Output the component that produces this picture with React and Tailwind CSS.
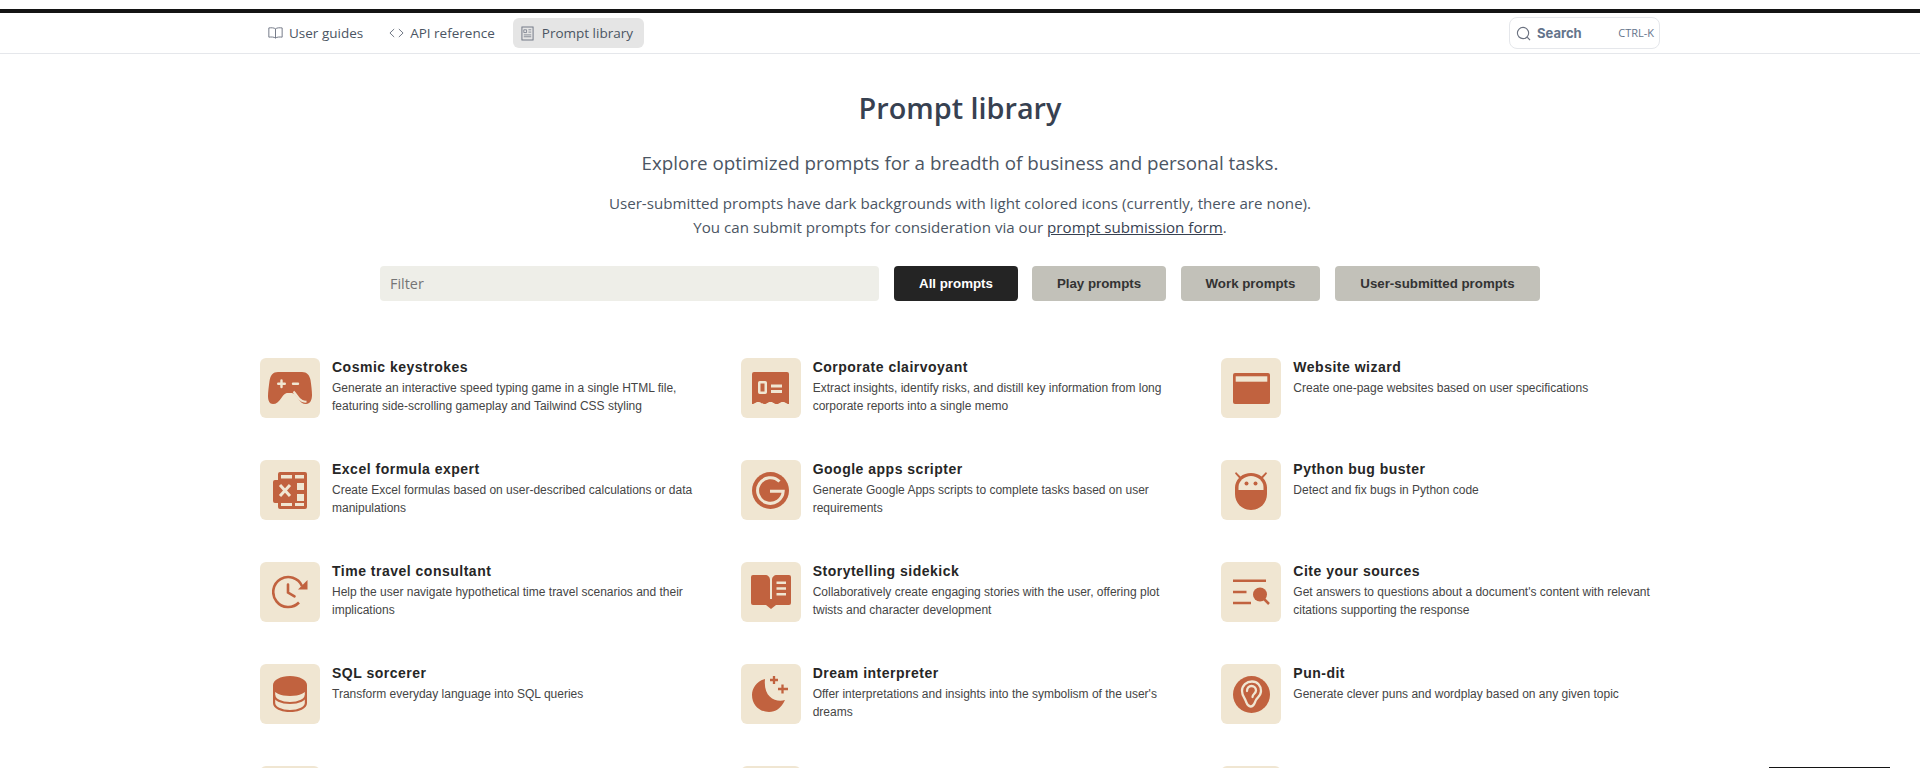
import React from "react";

const C = "#c1623f";
const B = "#f0e6d2";

const icons = {
  game: (
    <svg viewBox="0 0 44 32" className="w-[44px] h-[32px]">
      <path fill={C} d="M10 0H34c5 0 7.500 3 8.500 8 .8 5 1.500 11 1.500 15 0 5-2 9-6 9-3.500 0-5.500-2-7.500-5-2-3-3.500-6-7-6H20c-3.500 0-5 2.500-7 5.500-2.500 3.500-4.500 5.500-8 5.500C1.500 32 0 28.500 0 24c0-4 .8-10 1.500-15C2.500 3 5 0 10 0z" />
      <path fill="none" stroke={B} strokeWidth="2" d="M25.500 19.500c2.500 2.500 4 5.500 6 7.500 2 2 4.500 3 7 2.500" />
      <path stroke={B} strokeWidth="2.400" strokeLinecap="round" d="M13.500 8.500v6.500M10.200 11.800h6.600M25 11.800h5" />
    </svg>
  ),
  memo: (
    <svg viewBox="0 0 37 33" className="w-[37px] h-[33px]">
      <path fill={C} d="M2 0h33a2 2 0 0 1 2 2v30c-3 0-3-2-6.200-2s-3 2-6.100 2-3-2-6.200-2-3 2-6.200 2-3-2-6.100-2-3 2-6.200 2V2a2 2 0 0 1 2-2z" />
      <rect x="7.250" y="10.250" width="6.500" height="10.500" rx=".5" fill="none" stroke={B} strokeWidth="2.500" />
      <path stroke={B} strokeWidth="2.800" d="M19 14h11M19 19.500h11" />
    </svg>
  ),
  web: (
    <svg viewBox="0 0 37 31" className="w-[37px] h-[31px]">
      <rect width="37" height="31" rx="2" fill={C} />
      <rect x="2.700" y="3.300" width="31.600" height="5.400" fill={B} />
    </svg>
  ),
  excel: (
    <svg viewBox="0 0 34 37" className="w-[34px] h-[37px]">
      <path fill={C} d="M7 0h25a2 2 0 0 1 2 2v33a2 2 0 0 1-2 2H7a2 2 0 0 1-2-2v-4H2a2 2 0 0 1-2-2V10a2 2 0 0 1 2-2h3V2a2 2 0 0 1 2-2z" />
      <path fill={B} d="M8 3h11v3.500H8zM22 3h9v3.500h-9zM24 11h7v7h-7zM24 22h7v7h-7zM8 31h11v3H8zM22 31h9v3h-9z" />
      <path stroke={B} strokeWidth="3" d="M7 13l10 11M17 13L7 24" />
    </svg>
  ),
  google: (
    <svg viewBox="0 0 37 37" className="w-[37px] h-[37px]">
      <circle cx="18.500" cy="18.500" r="18.500" fill={C} />
      <path fill="none" stroke={B} strokeWidth="3" d="M27.500 9.500A12.800 12.800 0 1 0 31.200 19.200H18" />
    </svg>
  ),
  bug: (
    <svg viewBox="0 0 32 39" className="w-[32px] h-[39px]">
      <path fill={C} d="M1 1l4.500 4.500C8 3.500 12 2 16 2s8 1.500 10.500 3.500L31 1l1 1.500-4 4.500c2.500 2.500 4 6 4 9.500V23c0 9-7 16-16 16S0 32 0 23v-6.500C0 13 1.500 9.500 4 7L0 2.500z" />
      <path fill={B} d="M3.500 19v-3C3.500 10 9.500 5 16 5s12.500 5 12.500 11v3z" />
      <circle cx="11.500" cy="12.500" r="2" fill={C} />
      <circle cx="20.500" cy="12.500" r="2" fill={C} />
    </svg>
  ),
  time: (
    <svg viewBox="0 0 36 34" className="w-[36px] h-[34px]">
      <path fill="none" stroke={C} strokeWidth="2.600" d="M30 11A15 15 0 1 0 27 27.500" />
      <path fill={C} d="M35.500 5v9.500H26z" />
      <path fill="none" stroke={C} strokeWidth="2.600" strokeLinecap="round" d="M16 9.500v8l6.500 3.800" />
    </svg>
  ),
  book: (
    <svg viewBox="0 0 40 34" className="w-[40px] h-[34px]">
      <path fill={C} d="M2 0h12c3 0 5 2 5 5v19h2V5c0-3 2-5 5-5h12a2 2 0 0 1 2 2v26a2 2 0 0 1-2 2H25l-5 4-5-4H2a2 2 0 0 1-2-2V2a2 2 0 0 1 2-2z" />
      <path stroke={B} strokeWidth="2.400" d="M25.500 7.700h9.500M25.500 13.500h9.500M25.500 19.300h9.500" />
    </svg>
  ),
  cite: (
    <svg viewBox="0 0 37 26" className="w-[37px] h-[26px]">
      <path stroke={C} strokeWidth="2.500" d="M0 1.700h33M0 13h13.500M0 24h18" />
      <circle cx="27" cy="15.500" r="7" fill={C} />
      <path stroke={C} strokeWidth="2.500" d="M31 20l5 5" />
    </svg>
  ),
  sql: (
    <svg viewBox="0 0 34 36" className="w-[34px] h-[36px]">
      <path fill={C} d="M0 9c0-5 7.500-9 17-9s17 4 17 9v3c0 4.500-7.500 8-17 8S0 16.500 0 12z" />
      <path fill="none" stroke={C} strokeWidth="2.200" d="M1.100 12v15c0 4.500 7 8 15.900 8s15.900-3.500 15.900-8V12" />
      <path fill="none" stroke={C} strokeWidth="2.200" d="M1.100 19c0 4.500 7 8 15.900 8s15.900-3.500 15.900-8" />
    </svg>
  ),
  moon: (
    <svg viewBox="0 0 37 36" className="w-[37px] h-[36px]">
      <path fill={C} d="M13 3C5 5 0 12 0 19c0 10 7.500 17 17 17 6.500 0 12-3.500 16-12-9 2.500-22-2-20-21z" />
      <path stroke={C} strokeWidth="2.300" d="M22 0v8M18 4h8M30.500 8.500v9M26 13h10" />
    </svg>
  ),
  ear: (
    <svg viewBox="0 0 37 37" className="w-[37px] h-[37px]">
      <circle cx="18.500" cy="18.500" r="18.500" fill={C} />
      <path fill="none" stroke={B} strokeWidth="2.300" strokeLinecap="round" d="M9 15c0-5.500 4.500-9.500 10-9.500s9 4 9 9.500c0 4.500-3.500 6.500-5 9-1.500 2.500-1.500 6.500-5.500 6.500-3 0-3.500-2.500-4.500-5C12 22 9 20 9 15z" />
      <path fill="none" stroke={B} strokeWidth="2.300" strokeLinecap="round" d="M14 15c0-3 2-5 4.500-5s4.500 2 4.500 4.500c0 3-3.500 3.500-3.500 6.500" />
    </svg>
  ),
};

const cards = [
  ["game", "Cosmic keystrokes", "Generate an interactive speed typing game in a single HTML file, featuring side-scrolling gameplay and Tailwind CSS styling"],
  ["memo", "Corporate clairvoyant", "Extract insights, identify risks, and distill key information from long corporate reports into a single memo"],
  ["web", "Website wizard", "Create one-page websites based on user specifications"],
  ["excel", "Excel formula expert", "Create Excel formulas based on user-described calculations or data manipulations"],
  ["google", "Google apps scripter", "Generate Google Apps scripts to complete tasks based on user requirements"],
  ["bug", "Python bug buster", "Detect and fix bugs in Python code"],
  ["time", "Time travel consultant", "Help the user navigate hypothetical time travel scenarios and their implications"],
  ["book", "Storytelling sidekick", "Collaboratively create engaging stories with the user, offering plot twists and character development"],
  ["cite", "Cite your sources", "Get answers to questions about a document's content with relevant citations supporting the response"],
  ["sql", "SQL sorcerer", "Transform everyday language into SQL queries"],
  ["moon", "Dream interpreter", "Offer interpretations and insights into the symbolism of the user's dreams"],
  ["ear", "Pun-dit", "Generate clever puns and wordplay based on any given topic"],
];

function Card({ icon, title, desc }) {
  return (
    <div className="flex gap-3 h-[60px] min-w-0">
      <div className="w-[60px] h-[60px] shrink-0 rounded-md bg-[#f0e6d2] flex items-center justify-center">{icons[icon]}</div>
      <div className="min-w-0 max-w-[366px] font-['Liberation_Sans',sans-serif]">
        <div className="text-[14px] leading-[20px] font-bold tracking-[0.5px] text-[#262626] -mt-[1px]">{title}</div>
        <div className="mt-[2px] text-[12px] leading-[18px] text-[#454545]">{desc}</div>
      </div>
    </div>
  );
}

function Tab({ icon, label, active }) {
  return (
    <div className={"flex items-center h-[30px] pl-[8px] rounded-md text-[13.500px] text-[#4b5563] " + (active ? "bg-[#e5e5e5] pr-[11px] gap-[8px]" : "pr-[8px] gap-[6px]")}>
      {icon}
      <span className="mt-[1px]">{label}</span>
    </div>
  );
}

export default function App() {
  return (
    <div className="w-[1920px] h-[768px] overflow-hidden bg-white font-['Open_Sans',sans-serif] relative">
      <div className="h-[9px]" />
      <div className="h-[4px] bg-[#141414]" />
      <nav className="h-[41px] border-b border-[#e5e7eb] pl-[260px] pr-[260px] flex items-center justify-between">
        <div className="flex items-center gap-[10px]">
          <Tab
            label="User guides"
            icon={
              <svg viewBox="0 0 16 13" className="w-[15px] h-[12px]" fill="none" stroke="#6b7280" strokeWidth="1">
                <path d="M8 2C6.500.7 3.500.7.800 1v10c2.700-.3 5.700-.3 7.200 1 1.500-1.300 4.500-1.300 7.200-1V1C12.500.7 9.500.7 8 2zM8 2v10" />
              </svg>
            }
          />
          <Tab
            label="API reference"
            icon={
              <svg viewBox="0 0 16 10" className="w-[15px] h-[10px]" fill="none" stroke="#6b7280" strokeWidth="1">
                <path d="M5.500.7L1 5l4.500 4.300M10.500.7L15 5l-4.500 4.300" />
              </svg>
            }
          />
          <Tab
            active
            label="Prompt library"
            icon={
              <svg viewBox="0 0 14 16" className="w-[13px] h-[15px]" fill="none" stroke="#6b7280" strokeWidth="1">
                <rect x="1" y="1" width="12" height="14" />
                <path d="M3 4h3v3H3zM8 4h3M8 6.500h3M3 9.500h8M3 11.500h8" strokeWidth=".8" />
              </svg>
            }
          />
        </div>
        <div className="w-[151px] h-[32px] rounded-lg border border-[#e5e7eb] flex items-center pl-[6px] pr-[5px]">
          <svg viewBox="0 0 16 16" className="w-[15px] h-[15px]" fill="none" stroke="#6b7280" strokeWidth="1.200">
            <circle cx="7.500" cy="7.500" r="6" />
            <path d="M12 12l3 3" />
          </svg>
          <span className="ml-[6px] mt-[1px] text-[13px] font-bold text-[#64748b] font-['Inter',sans-serif]">Search</span>
          <span className="ml-auto mt-[1px] text-[11px] text-[#64748b]">CTRL-K</span>
        </div>
      </nav>
      <main className="text-center">
        <h1 className="mt-[34px] text-[28.800px] leading-[40px] font-[550] text-[#374151]">Prompt library</h1>
        <p className="mt-[21px] text-[18.800px] leading-[28px] text-[#4b5563]">Explore optimized prompts for a breadth of business and personal tasks.</p>
        <p className="mt-[14px] text-[15.130px] leading-[24px] text-[#4b5563]">
          User-submitted prompts have dark backgrounds with light colored icons (currently, there are none).
          <br />
          You can submit prompts for consideration via our <span className="underline text-[#374151]">prompt submission form</span>.
        </p>
        <div className="mt-[27px] ml-[380px] flex items-center h-[35px] font-['Liberation_Sans',sans-serif]">
          <div className="w-[499px] h-[35px] rounded-[4px] bg-[#eeeee8] text-left pl-[10px] leading-[35px] text-[14.400px] text-[#757575] font-['Open_Sans',sans-serif]">Filter</div>
          <div className="ml-[15px] w-[124px] h-[35px] rounded-[4px] bg-[#242424] text-white text-[13.300px] font-bold leading-[35px]">All prompts</div>
          <div className="ml-[14px] w-[134px] h-[35px] rounded-[4px] bg-[#c2c1b9] text-[#333333] text-[13.300px] font-bold leading-[35px]">Play prompts</div>
          <div className="ml-[15px] w-[139px] h-[35px] rounded-[4px] bg-[#c2c1b9] text-[#333333] text-[13.300px] font-bold leading-[35px]">Work prompts</div>
          <div className="ml-[15px] w-[205px] h-[35px] rounded-[4px] bg-[#c2c1b9] text-[#333333] text-[13.300px] font-bold leading-[35px]">User-submitted prompts</div>
        </div>
      </main>
      <section className="mt-[57px] ml-[260px] w-[1442px] grid grid-cols-3 gap-y-[42px] gap-x-0 text-left">
        {cards.map(([i, t, d]) => (
          <Card key={t} icon={i} title={t} desc={d} />
        ))}
        <div className="w-[60px] h-[60px] rounded-md bg-[#f0e6d2]" />
        <div className="w-[60px] h-[60px] rounded-md bg-[#f0e6d2]" />
        <div className="w-[60px] h-[60px] rounded-md bg-[#f0e6d2]" />
      </section>
      <div className="absolute right-[30px] bottom-0 w-[121px] h-[1px] bg-[#141414]" />
    </div>
  );
}
